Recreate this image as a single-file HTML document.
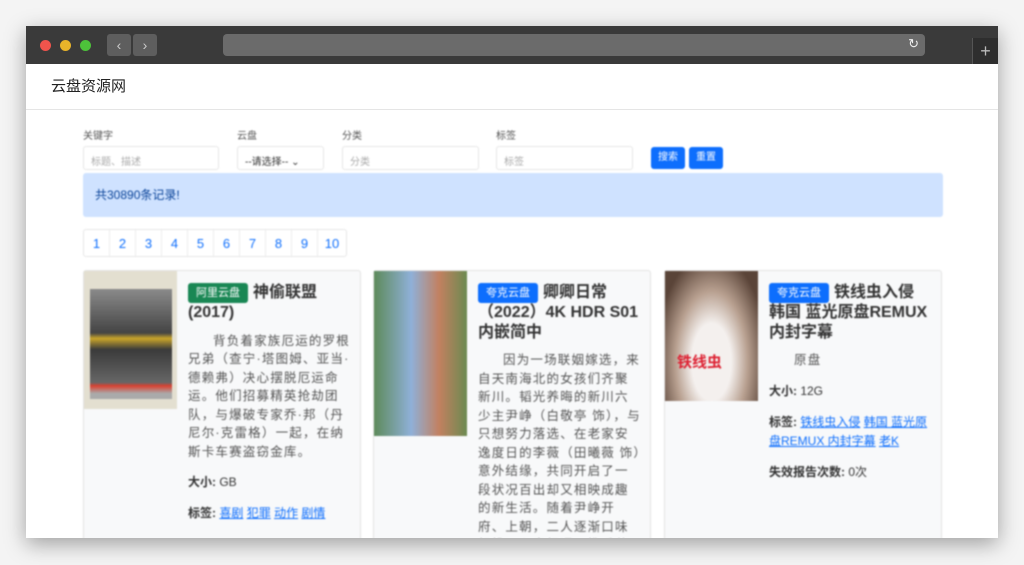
<!DOCTYPE html>
<html><head><meta charset="utf-8"><style>
*{box-sizing:border-box;margin:0;padding:0}
body{width:1024px;height:565px;background:#f4f4f4;font-family:"Liberation Sans","Noto Sans CJK SC",sans-serif;position:relative;overflow:hidden}
.win{position:absolute;left:26px;top:26px;width:972px;height:512px;background:#fff;box-shadow:0 6px 20px rgba(0,0,0,.35);overflow:hidden}
.bar{height:38px;background:#3a3a3a;position:relative}
.dot{position:absolute;top:14px;width:11px;height:11px;border-radius:50%}
.nb{position:absolute;top:8px;width:24px;height:22px;background:#5e5e5e;border-radius:3px;color:#ccc;font-size:14px;text-align:center;line-height:22px}
.url{position:absolute;left:197px;top:8px;width:702px;height:22px;background:#6b6b6b;border-radius:4px}
.plus{position:absolute;left:946px;top:12px;width:26px;height:26px;background:#2e2e2e;color:#bbb;font-size:18px;text-align:center;line-height:26px;border-left:1px solid #555}
.nav{height:46px;border-bottom:1px solid #e5e5e5;padding-left:25px;line-height:46px;font-size:15px;color:#222}
.c{position:absolute;left:0;top:0;width:100%;height:100%;filter:blur(0.8px)}
.lbl{position:absolute;top:101px;font-size:10px;color:#555}
.inp{position:absolute;top:120px;height:24px;border:1px solid #e6e6e6;border-radius:3px;font-size:10px;color:#aaa;padding:6px 7px}
.btn{position:absolute;top:121px;width:34px;height:22px;background:#0d6efd;border-radius:3px;color:#fff;font-size:10px;text-align:center;line-height:22px}
.alert{position:absolute;left:57px;top:147px;width:860px;height:44px;background:#cfe2ff;border-radius:3px;color:#084298;font-size:12px;padding-left:12px;line-height:44px}
.pg{position:absolute;left:57px;top:203px;height:28px;display:flex;border:1px solid #e6e6e6;border-radius:3px}
.pg span{width:26px;text-align:center;line-height:28px;color:#0d6efd;font-size:13px;border-right:1px solid #eee}
.pg span:last-child{width:28px;border:none}
.card{position:absolute;top:244px;width:278px;height:280px;background:#f8f9fa;border:1px solid #e3e3e3;border-radius:3px}
.img{position:absolute;left:0;top:0;width:93px}
.tx{position:absolute;left:104px;top:12px;width:164px}
.t{font-size:16px;font-weight:bold;color:#333;line-height:19.5px}
.tag{display:inline-block;font-size:11px;color:#fff;padding:0 8px;line-height:20px;border-radius:3px;margin-right:5px;font-weight:normal;vertical-align:1px}
.d{font-size:12.5px;letter-spacing:1.2px;color:#555;line-height:18.5px;text-indent:2em;margin-top:9px}
.m{font-size:12px;color:#333;line-height:19px;margin-top:12px}
a{color:#0d6efd;text-decoration:underline}
</style></head><body>
<div class="win">
<div class="bar">
<div class="dot" style="left:14px;background:#f0544c"></div>
<div class="dot" style="left:34px;background:#e8b42a"></div>
<div class="dot" style="left:54px;background:#4dc23a"></div>
<div class="nb" style="left:81px">&#8249;</div><div class="nb" style="left:107px">&#8250;</div>
<div class="url"><span style="position:absolute;right:6px;top:2px;color:#eee;font-size:13px">&#8635;</span></div>
<div class="plus">+</div>
</div>
<div class="nav">云盘资源网</div>
<div class="c">
<div class="lbl" style="left:57px">关键字</div><div class="lbl" style="left:211px">云盘</div><div class="lbl" style="left:316px">分类</div><div class="lbl" style="left:470px">标签</div>
<div class="inp" style="left:57px;width:136px">标题、描述</div>
<div class="inp" style="left:211px;width:87px;color:#333">--请选择-- &#8964;</div>
<div class="inp" style="left:316px;width:137px">分类</div>
<div class="inp" style="left:470px;width:137px">标签</div>
<div class="btn" style="left:625px">搜索</div><div class="btn" style="left:663px">重置</div>
<div class="alert">共30890条记录!</div>
<div class="pg"><span>1</span><span>2</span><span>3</span><span>4</span><span>5</span><span>6</span><span>7</span><span>8</span><span>9</span><span>10</span></div>

<div class="card" style="left:57px">
<div class="img" style="height:138px;background:#e3dfd0"><div style="position:absolute;left:6px;top:18px;width:82px;height:110px;background:linear-gradient(#8a8a8a,#444 40%,#c9a52a 45%,#3a3a3a 55%,#666 85%,#d94030 88%,#aaa 95%)"></div></div>
<div class="tx"><div class="t"><span class="tag" style="background:#198754">阿里云盘</span>神偷联盟 (2017)</div>
<div class="d">背负着家族厄运的罗根兄弟（查宁·塔图姆、亚当·德赖弗）决心摆脱厄运命运。他们招募精英抢劫团队，与爆破专家乔·邦（丹尼尔·克雷格）一起，在纳斯卡车赛盗窃金库。</div>
<div class="m"><b>大小:</b> GB</div>
<div class="m"><b>标签:</b> <a>喜剧</a> <a>犯罪</a> <a>动作</a> <a>剧情</a></div></div>
</div>

<div class="card" style="left:347px">
<div class="img" style="height:165px;background:linear-gradient(90deg,#5d8a5a,#8fb0d8 40%,#c28060 70%,#6b8a50)"></div>
<div class="tx"><div class="t"><span class="tag" style="background:#0d6efd">夸克云盘</span>卿卿日常 （2022）4K HDR S01 内嵌简中</div>
<div class="d">因为一场联姻嫁选，来自天南海北的女孩们齐聚新川。韬光养晦的新川六少主尹峥（白敬亭 饰），与只想努力落选、在老家安逸度日的李薇（田曦薇 饰）意外结缘，共同开启了一段状况百出却又相映成趣的新生活。随着尹峥开府、上朝，二人逐渐口味相投，心意相通，携手共度三餐</div></div>
</div>

<div class="card" style="left:638px">
<div class="img" style="height:130px;background:radial-gradient(ellipse at 50% 70%,#f4f0ee 30%,#b8a090 55%,#5a4438 85%)"><div style="position:absolute;left:12px;top:80px;width:70px;height:20px;color:#d23;font-size:15px;font-weight:bold">铁线虫</div></div>
<div class="tx"><div class="t"><span class="tag" style="background:#0d6efd">夸克云盘</span>铁线虫入侵 韩国 蓝光原盘REMUX 内封字幕</div>
<div class="d">原盘</div>
<div class="m"><b>大小:</b> 12G</div>
<div class="m"><b>标签:</b> <a>铁线虫入侵</a> <a>韩国 蓝光原盘REMUX 内封字幕</a> <a>老K</a></div>
<div class="m"><b>失效报告次数:</b> 0次</div></div>
</div>
</div>
</div>
</body></html>
